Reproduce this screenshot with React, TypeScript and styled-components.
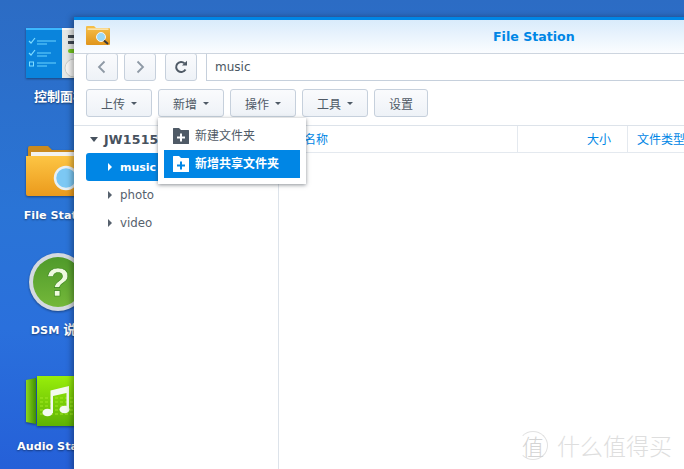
import React from 'react';
import styled, { createGlobalStyle } from 'styled-components';

const Global = createGlobalStyle`
  html, body { margin: 0; padding: 0; height: 100%; }
  body { overflow: hidden; font-family: "DejaVu Sans", "Noto Sans CJK SC", sans-serif; }
`;

const Desktop = styled.div`
  position: relative;
  width: 684px;
  height: 469px;
  overflow: hidden;
  background: linear-gradient(180deg, #2c6cc4 0%, #2a74d6 45%, #2a70dc 70%, #2560d8 100%);
`;

const IconColumn = styled.div`
  width: 120px;
  display: flex;
  flex-direction: column;
`;

const DeskItem = styled.div<{ $height: number }>`
  height: ${(p) => p.$height}px;
  display: flex;
  flex-direction: column;
  align-items: center;
  justify-content: flex-end;
`;

const DeskIcon = styled.div`
  width: 64px;
  margin-left: -4px;
  display: flex;
  justify-content: flex-start;
  filter: drop-shadow(0 1px 1px rgba(0, 0, 0, 0.4));
`;

const DeskLabel = styled.div<{ $gap: number }>`
  margin-top: ${(p) => p.$gap}px;
  width: 120px;
  text-align: center;
  font-size: 11.2px;
  line-height: 16px;
  font-weight: 700;
  color: #fff;
  white-space: nowrap;
  text-shadow: 0 1px 2px rgba(0, 0, 0, 0.45);
`;

const CjkLabel = styled.span`
  font-family: "Noto Sans CJK SC", sans-serif;
  font-size: 13px;
`;

const Window = styled.div`
  position: absolute;
  left: 74px;
  top: 17px;
  width: 920px;
  height: 452px;
  background: #fff;
  border-top: 3px solid #0086e5;
  box-shadow: -2px 0 6px rgba(0, 0, 0, 0.35);
  display: flex;
  flex-direction: column;
`;

const TitleBar = styled.div`
  height: 33px;
  flex: none;
  position: relative;
  background: linear-gradient(180deg, #d9ebfb 0%, #fbfdff 100%);
  border-bottom: 1px solid #cdd5df;
  box-sizing: content-box;
  padding-left: 12px;
  display: flex;
  align-items: flex-start;
`;

const AppIcon = styled.div`
  margin-top: 5px;
  width: 24px;
  height: 22px;
`;

const Title = styled.div`
  position: absolute;
  left: 419px;
  top: 9px;
  font-size: 12.6px;
  line-height: 16px;
  font-weight: 700;
  color: #0086e5;
`;

const NavRow = styled.div`
  height: 27px;
  flex: none;
  display: flex;
  padding-left: 12px;
  margin-top: -1px;
`;

const NavButton = styled.button<{ $gap?: number }>`
  width: 32px;
  height: 28px;
  margin-right: ${(p) => p.$gap ?? 6}px;
  padding: 0;
  display: flex;
  align-items: center;
  justify-content: center;
  border: 1px solid #c6d0dc;
  border-radius: 3px;
  background: linear-gradient(180deg, #fafbfd 0%, #eef2f7 100%);
`;

const Address = styled.div`
  flex: 1;
  height: 28px;
  box-sizing: border-box;
  margin-left: 3px;
  padding-left: 8px;
  border: 1px solid #c6d0dc;
  border-top-color: #cdd5df;
  border-right: 0;
  background: #fff;
  font-size: 12px;
  line-height: 26px;
  color: #4b5662;
`;

const ToolRow = styled.div`
  height: 46px;
  flex: none;
  display: flex;
  gap: 6px;
  padding: 9px 0 0 12px;
  box-sizing: border-box;
  border-bottom: 1px solid #dde3ea;
`;

const ToolButton = styled.button<{ $width: number }>`
  width: ${(p) => p.$width}px;
  height: 28px;
  padding: 0;
  display: flex;
  align-items: center;
  justify-content: center;
  gap: 6px;
  border: 1px solid #c6d0dc;
  border-radius: 3px;
  background: linear-gradient(180deg, #fafbfd 0%, #eef2f7 100%);
  font-family: "Noto Sans CJK SC", sans-serif;
  font-size: 12px;
  color: #4f5a66;
`;

const Caret = styled.span`
  width: 0;
  height: 0;
  border-left: 3.5px solid transparent;
  border-right: 3.5px solid transparent;
  border-top: 3px solid #4f5a66;
`;

const Body = styled.div`
  flex: 1;
  display: flex;
  min-height: 0;
`;

const Tree = styled.div`
  width: 205px;
  flex: none;
  box-sizing: border-box;
  border-right: 1px solid #dde3ea;
  padding: 0 0 0 12px;
`;

const TreeHead = styled.div`
  height: 27px;
  display: flex;
  align-items: center;
  padding-left: 4px;
  gap: 6px;
  font-size: 12.5px;
  font-weight: 700;
  letter-spacing: 0.2px;
  color: #47525e;
`;

const HeadCaret = styled.span`
  width: 0;
  height: 0;
  border-left: 4px solid transparent;
  border-right: 4px solid transparent;
  border-top: 5px solid #47525e;
`;

const TreeRow = styled.div<{ $active?: boolean }>`
  height: 28px;
  display: flex;
  align-items: center;
  padding-left: 22px;
  gap: 8px;
  border-radius: 3px 0 0 3px;
  font-size: ${(p) => (p.$active ? 11 : 11.8)}px;
  font-weight: ${(p) => (p.$active ? 700 : 400)};
  color: ${(p) => (p.$active ? '#fff' : '#56616d')};
  background: ${(p) => (p.$active ? '#0086e5' : 'transparent')};
`;

const RowCaret = styled.span<{ $active?: boolean }>`
  width: 0;
  height: 0;
  border-top: 4px solid transparent;
  border-bottom: 4px solid transparent;
  border-left: 4px solid ${(p) => (p.$active ? '#fff' : '#56616d')};
`;

const Table = styled.div`
  flex: 1;
`;

const TableHead = styled.div`
  height: 27px;
  box-sizing: border-box;
  display: flex;
  border-bottom: 1px solid #e4e9ef;
  font-family: "Noto Sans CJK SC", sans-serif;
  font-size: 12px;
  line-height: 25px;
  color: #0086e5;
`;

const HeadCell = styled.div<{ $width: number; $right?: boolean; $pad?: number }>`
  width: ${(p) => p.$width}px;
  flex: none;
  box-sizing: border-box;
  padding: 0 ${(p) => (p.$right ? 16 : 9)}px 0 ${(p) => p.$pad ?? (p.$right ? 0 : 9)}px;
  text-align: ${(p) => (p.$right ? 'right' : 'left')};
  border-right: 1px solid #e4e9ef;
  white-space: nowrap;
`;

const Menu = styled.div`
  position: absolute;
  left: 158px;
  top: 118px;
  width: 148px;
  height: 66px;
  box-sizing: border-box;
  padding: 4px 6px;
  background: #fff;
  box-shadow: 0 1px 4px rgba(40, 50, 60, 0.55);
`;

const MenuItem = styled.div<{ $active?: boolean }>`
  height: 28px;
  display: flex;
  align-items: center;
  gap: 6px;
  padding-left: 9px;
  font-family: "Noto Sans CJK SC", sans-serif;
  font-size: 12px;
  font-weight: ${(p) => (p.$active ? 700 : 400)};
  color: ${(p) => (p.$active ? '#fff' : '#4f5a66')};
  background: ${(p) => (p.$active ? '#0086e5' : 'transparent')};
`;

const MenuText = styled.span`
  padding-bottom: 4px;
`;

const Watermark = styled.div`
  position: absolute;
  left: 518px;
  top: 430px;
  display: flex;
  align-items: center;
  gap: 9px;
  font-family: "Noto Sans CJK SC", sans-serif;
  font-weight: 300;
  font-size: 23px;
  line-height: 30px;
  color: #dedede;
  white-space: nowrap;
`;

const WaterBadge = styled.span`
  width: 30px;
  height: 29px;
  box-sizing: border-box;
  border: 1px solid #e2e2e2;
  border-left-color: transparent;
  border-radius: 50%;
  display: flex;
  align-items: center;
  justify-content: center;
  font-size: 22px;
  color: #d4d4d4;
`;

const FolderPlus = ({ fill, plus }: { fill: string; plus: string }) => (
  <svg width="16" height="16" viewBox="0 0 16 16">
    <path d="M0 .5A.5.5 0 0 1 .5 0H6l2 2h7.5a.5.5 0 0 1 .5.5v13a.5.5 0 0 1-.5.5H.5a.5.5 0 0 1-.5-.5z" fill={fill} />
    <path d="M7 5.5h2v3h3v2H9v3H7v-3H4v-2h3z" fill={plus} />
  </svg>
);

const ControlPanelIcon = () => (
  <svg width="64" height="50" viewBox="0 0 64 50">
    <rect x="36" y="0" width="28" height="50" fill="#e4e8e6" />
    <rect x="36" y="0" width="28" height="2" fill="#f8f8f8" />
    <rect x="42" y="7" width="20" height="3" fill="#3f4a54" />
    <rect x="42" y="13" width="20" height="3" fill="#3f4a54" />
    <rect x="42" y="21" width="20" height="4" rx="2" fill="#74c81e" />
    <circle cx="48" cy="40" r="9" fill="#f4f4f2" stroke="#c9cdc9" />
    <rect x="0" y="0" width="36" height="50" fill="#0a84dc" />
    <rect x="0" y="0" width="36" height="2" fill="#3cb8ff" />
    <path d="M3 13l2 2 4-5M3 25l2 2 4-5" fill="none" stroke="#7fdcff" strokeWidth="1.2" />
    <rect x="3.5" y="34" width="4" height="4" fill="none" stroke="#7fdcff" />
    <path d="M11 13h19M11 16h10M11 25h14M11 28h10M11 35h19M11 38h10" stroke="#6bd4ff" strokeWidth="1" />
  </svg>
);

const FolderIcon = () => (
  <svg width="64" height="50" viewBox="0 0 64 50">
    <path d="M2 2a2 2 0 0 1 2-2h18l4 4h34v14H2z" fill="#c98a1e" />
    <rect x="5" y="6" width="54" height="8" fill="#f2f2f0" />
    <path d="M0 10h64v40H2a2 2 0 0 1-2-2z" fill="url(#fsFold)" />
    <circle cx="40" cy="32" r="11" fill="#7cc8f4" stroke="#e8f0f4" strokeWidth="2.5" />
    <defs>
      <linearGradient id="fsFold" x1="0" y1="0" x2="0" y2="1">
        <stop offset="0" stopColor="#fdc544" />
        <stop offset="1" stopColor="#eb9a1c" />
      </linearGradient>
    </defs>
  </svg>
);

const HelpIcon = () => (
  <svg width="64" height="60" viewBox="0 0 64 60">
    <circle cx="32" cy="30" r="29" fill="#d4dae0" />
    <circle cx="32" cy="30" r="25" fill="url(#helpG)" />
    <text x="32" y="44" textAnchor="middle" fontFamily="'Liberation Sans', sans-serif" fontWeight="700" fontSize="40" fill="#f0fae0" stroke="#2e7d12" strokeWidth="0.6">?</text>
    <defs>
      <linearGradient id="helpG" x1="0" y1="0" x2="0" y2="1">
        <stop offset="0" stopColor="#4f9a2a" />
        <stop offset="1" stopColor="#74b83a" />
      </linearGradient>
    </defs>
  </svg>
);

const AudioIcon = () => (
  <svg width="64" height="50" viewBox="0 0 64 50">
    <path d="M0 4l10-2v46l-10-2z" fill="url(#audS)" />
    <rect x="11" y="0" width="53" height="50" fill="url(#audG)" />
    <path d="M14 22h46M14 26h46M14 30h46M14 34h46M14 38h46" stroke="#a6ec28" strokeWidth="1.4" strokeDasharray="3 2" opacity="0.6" />
    <ellipse cx="21.5" cy="36.5" rx="5" ry="3.8" fill="#f4faf0" />
    <ellipse cx="38.5" cy="33.5" rx="5" ry="3.8" fill="#f4faf0" />
    <path d="M24.5 37V14.5L43 10v24h-2.5V17L27 20v17z" fill="#f4faf0" />
    <defs>
      <linearGradient id="audG" x1="0" y1="0" x2="0" y2="1">
        <stop offset="0" stopColor="#98ee0a" />
        <stop offset="1" stopColor="#5eb204" />
      </linearGradient>
      <linearGradient id="audS" x1="0" y1="0" x2="1" y2="0">
        <stop offset="0" stopColor="#8ed81a" />
        <stop offset="1" stopColor="#3f8e04" />
      </linearGradient>
    </defs>
  </svg>
);

const AppFolderIcon = () => (
  <svg width="24" height="20" viewBox="0 0 24 20">
    <path d="M0 2a1 1 0 0 1 1-1h7l2 2h13a1 1 0 0 1 1 1v15a1 1 0 0 1-1 1H1a1 1 0 0 1-1-1z" fill="url(#afG)" />
    <rect x="1.5" y="3.5" width="21" height="1.2" fill="#fff6d8" />
    <circle cx="15" cy="12" r="4.5" fill="#9ad8f6" stroke="#f4f4f4" />
    <path d="M18 15.5l4 3.5" stroke="#3a3a3a" strokeWidth="2" />
    <defs>
      <linearGradient id="afG" x1="0" y1="0" x2="0" y2="1">
        <stop offset="0" stopColor="#f6c04a" />
        <stop offset="1" stopColor="#e0951c" />
      </linearGradient>
    </defs>
  </svg>
);

const Chevron = ({ d }: { d: string }) => (
  <svg width="10" height="14" viewBox="0 0 10 14">
    <path d={d} fill="none" stroke="#8e99a5" strokeWidth="1.8" />
  </svg>
);

const RefreshIcon = () => (
  <svg width="14" height="14" viewBox="0 0 14 14">
    <path d="M11.5 9.5A5 5 0 1 1 10.6 3.4" fill="none" stroke="#4f5a66" strokeWidth="2" />
    <path d="M8 5.6h5V.8z" fill="#4f5a66" />
  </svg>
);

export default function App() {
  return (
    <Desktop>
      <Global />
      <IconColumn>
        <DeskItem $height={106}>
          <DeskIcon><ControlPanelIcon /></DeskIcon>
          <DeskLabel $gap={10}><CjkLabel>控制面板</CjkLabel></DeskLabel>
        </DeskItem>
        <DeskItem $height={118}>
          <DeskIcon><FolderIcon /></DeskIcon>
          <DeskLabel $gap={12}>File Station</DeskLabel>
        </DeskItem>
        <DeskItem $height={115}>
          <DeskIcon><HelpIcon /></DeskIcon>
          <DeskLabel $gap={9}>DSM <CjkLabel>说明</CjkLabel></DeskLabel>
        </DeskItem>
        <DeskItem $height={116}>
          <DeskIcon><AudioIcon /></DeskIcon>
          <DeskLabel $gap={13}>Audio Station</DeskLabel>
        </DeskItem>
      </IconColumn>

      <Window>
        <TitleBar>
          <AppIcon><AppFolderIcon /></AppIcon>
          <Title>File Station</Title>
        </TitleBar>
        <NavRow>
          <NavButton><Chevron d="M7.5 1.5L2 7l5.5 5.5" /></NavButton>
          <NavButton $gap={9}><Chevron d="M2.5 1.5L8 7l-5.5 5.5" /></NavButton>
          <NavButton><RefreshIcon /></NavButton>
          <Address>music</Address>
        </NavRow>
        <ToolRow>
          <ToolButton $width={66}>上传<Caret /></ToolButton>
          <ToolButton $width={66}>新增<Caret /></ToolButton>
          <ToolButton $width={66}>操作<Caret /></ToolButton>
          <ToolButton $width={66}>工具<Caret /></ToolButton>
          <ToolButton $width={54}>设置</ToolButton>
        </ToolRow>
        <Body>
          <Tree>
            <TreeHead><HeadCaret />JW1515</TreeHead>
            <TreeRow $active><RowCaret $active />music</TreeRow>
            <TreeRow><RowCaret />photo</TreeRow>
            <TreeRow><RowCaret />video</TreeRow>
          </Tree>
          <Table>
            <TableHead>
              <HeadCell $width={239} $pad={25}>名称</HeadCell>
              <HeadCell $width={110} $right>大小</HeadCell>
              <HeadCell $width={110}>文件类型</HeadCell>
            </TableHead>
          </Table>
        </Body>
      </Window>

      <Menu>
        <MenuItem><FolderPlus fill="#4f5a66" plus="#fff" /><MenuText>新建文件夹</MenuText></MenuItem>
        <MenuItem $active><FolderPlus fill="#fff" plus="#0086e5" /><MenuText>新增共享文件夹</MenuText></MenuItem>
      </Menu>

      <Watermark>
        <WaterBadge>值</WaterBadge>
        什么值得买
      </Watermark>
    </Desktop>
  );
}
